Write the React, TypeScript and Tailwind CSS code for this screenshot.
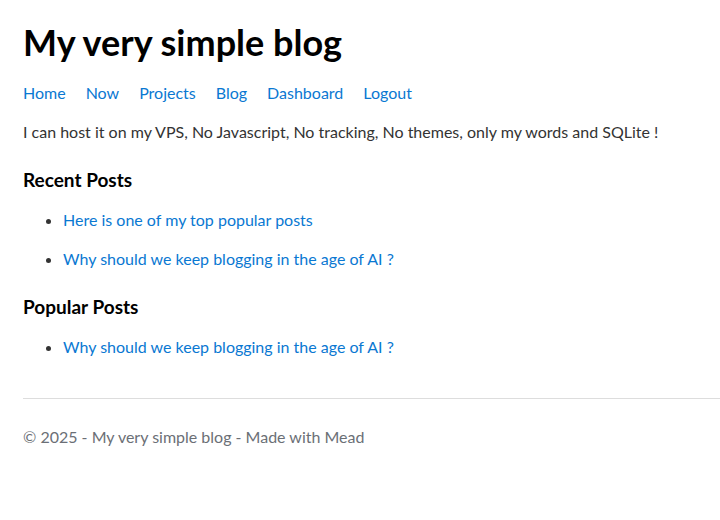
export default function App() {
  const recent = ["Here is one of my top popular posts", "Why should we keep blogging in the age of AI ?"];
  const popular = ["Why should we keep blogging in the age of AI ?"];
  const nav = ["Home", "Now", "Projects", "Blog", "Dashboard", "Logout"];

  return (
    <div className="min-h-[520px] bg-white pl-[23px] text-[#333] font-['Lato',sans-serif] text-base">
      <header className="pt-[18px]">
        <h1 className="text-[36px] font-bold text-black leading-[48px]">My very simple blog</h1>
        <nav className="mt-[15px] flex gap-5 leading-6">
          {nav.map((n) => (
            <a key={n} href="#" className="text-[#0a78d2]">
              {n}
            </a>
          ))}
        </nav>
      </header>

      <main className="mt-[15px]">
        <p className="leading-6">
          I can host it on my VPS, No Javascript, No tracking, No themes, only my words and SQLite !
        </p>

        <h2 className="mt-[24px] text-[19px] font-bold text-black leading-6">Recent Posts</h2>
        <ul className="mt-[16px] list-disc pl-10 flex flex-col gap-[15px]">
          {recent.map((p) => (
            <li key={p} className="leading-6">
              <a href="#" className="text-[#0a78d2]">{p}</a>
            </li>
          ))}
        </ul>

        <h2 className="mt-[24px] text-[19px] font-bold text-black leading-6">Popular Posts</h2>
        <ul className="mt-[16px] list-disc pl-10 flex flex-col gap-[15px]">
          {popular.map((p) => (
            <li key={p} className="leading-6">
              <a href="#" className="text-[#0a78d2]">{p}</a>
            </li>
          ))}
        </ul>
      </main>

      <footer className="mt-[39px] border-t border-[#ddd] pt-[26px]">
        <p className="text-[#6b6f76] leading-6">© 2025 - My very simple blog - Made with Mead</p>
      </footer>
    </div>
  );
}
